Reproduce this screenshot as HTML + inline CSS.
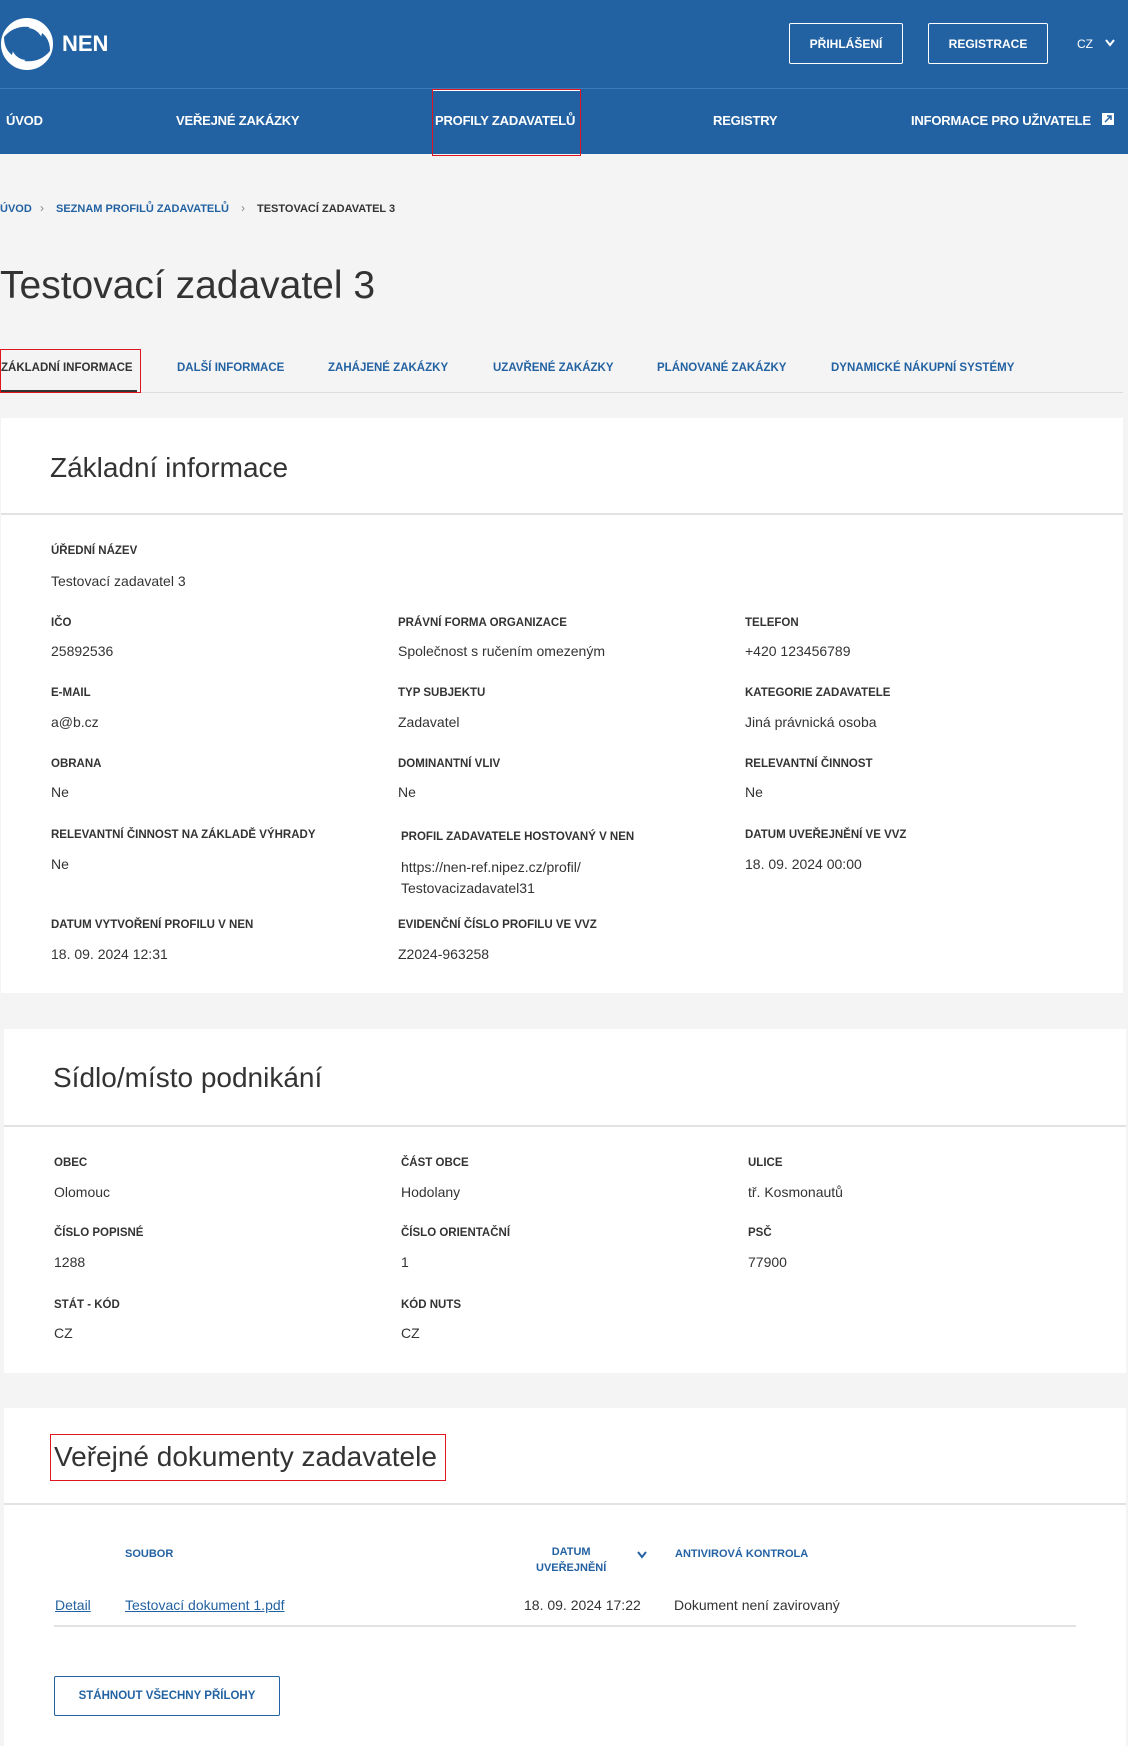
<!DOCTYPE html>
<html><head><meta charset="utf-8"><style>
*{margin:0;padding:0;box-sizing:border-box}
body{width:1128px;height:1746px;background:#f4f4f4;font-family:"Liberation Sans",sans-serif;color:#333;position:relative;overflow:hidden}
.a{position:absolute;white-space:nowrap}
.hdr{position:absolute;left:0;top:0;width:1128px;height:154px;background:#2362a2}
.navl{position:absolute;left:0;top:88px;width:1128px;height:1px;background:#3d7ab8}
.w{color:#fff;font-weight:bold;font-size:13px;letter-spacing:-0.2px}
.btn{position:absolute;border:1px solid #fff;border-radius:2px;color:#fff;font-weight:bold;font-size:12px;display:flex;align-items:center;justify-content:center}
.bc{font-size:11px;font-weight:bold;color:#2362a2}
.tab{font-size:11.5px;font-weight:bold;color:#2362a2;top:362px}
.card{position:absolute;background:#fff}
.h2{font-size:28px;color:#333}
.div{position:absolute;left:0;right:0;height:2px;background:#e2e2e2}
.lb{font-size:11.5px;font-weight:bold;color:#333}
.v{font-size:14px;color:#333}
.th{font-size:11px;font-weight:bold;color:#2362a2}
</style></head><body>
<div class="hdr"></div>
<div class="navl"></div>
<svg class="a" style="left:0;top:17px" width="54" height="54" viewBox="0 0 54 54">
<circle cx="27" cy="27" r="21" fill="none" stroke="#fff" stroke-width="10"/>
<path d="M4 20 Q14 8 30 10 Q16 18 12 38 Q4 32 4 20Z" fill="#2362a2"/>
<path d="M50 34 Q40 46 24 44 Q38 36 42 16 Q50 22 50 34Z" fill="#2362a2"/>
</svg>
<div class="a" style="left:62px;top:31px;color:#fff;font-weight:bold;font-size:22px">NEN</div>
<div class="btn" style="left:789px;top:23px;width:114px;height:41px">PŘIHLÁŠENÍ</div>
<div class="btn" style="left:928px;top:23px;width:120px;height:41px">REGISTRACE</div>
<div class="a" style="left:1077px;top:37px;color:#fff;font-size:12px">CZ</div>
<svg class="a" style="left:1104px;top:38px" width="12" height="10"><path d="M2 2 L6 7 L10 2" stroke="#fff" stroke-width="2" fill="none"/></svg>
<div class="a w" style="left:6px;top:113px">ÚVOD</div>
<div class="a w" style="left:176px;top:113px">VEŘEJNÉ ZAKÁZKY</div>
<div class="a" style="left:433px;top:89px;width:148px;height:2px;background:#fff"></div>
<div class="a" style="left:432px;top:89px;width:149px;height:67px;border:1px solid #e0141e"></div>
<div class="a w" style="left:435px;top:113px">PROFILY ZADAVATELŮ</div>
<div class="a w" style="left:713px;top:113px">REGISTRY</div>
<div class="a w" style="left:911px;top:113px">INFORMACE PRO UŽIVATELE</div>
<svg class="a" style="left:1102px;top:113px" width="12" height="12"><rect width="12" height="12" fill="#fff"/><path d="M3 9 L9 3 M5 3 H9 V7" stroke="#2362a2" stroke-width="1.5" fill="none"/></svg>

<div class="a bc" style="left:0;top:203px">ÚVOD</div>
<div class="a" style="left:40px;top:201px;color:#888;font-size:12px">›</div>
<div class="a bc" style="left:56px;top:203px">SEZNAM PROFILŮ ZADAVATELŮ</div>
<div class="a" style="left:241px;top:201px;color:#888;font-size:12px">›</div>
<div class="a bc" style="left:257px;top:203px;color:#333">TESTOVACÍ ZADAVATEL 3</div>

<div class="a" style="left:0;top:264px;font-size:39px;color:#333">Testovací zadavatel 3</div>

<div class="a" style="left:0;top:392px;width:1123px;height:1px;background:#ddd"></div>
<div class="a" style="left:0;top:390px;width:137px;height:3px;background:#333"></div>
<div class="a" style="left:0;top:349px;width:141px;height:44px;border:1px solid #e0141e"></div>
<div class="a tab" style="left:1px;color:#333">ZÁKLADNÍ INFORMACE</div>
<div class="a tab" style="left:177px">DALŠÍ INFORMACE</div>
<div class="a tab" style="left:328px">ZAHÁJENÉ ZAKÁZKY</div>
<div class="a tab" style="left:493px">UZAVŘENÉ ZAKÁZKY</div>
<div class="a tab" style="left:657px">PLÁNOVANÉ ZAKÁZKY</div>
<div class="a tab" style="left:831px">DYNAMICKÉ NÁKUPNÍ SYSTÉMY</div>

<div class="card" style="left:1px;top:418px;width:1122px;height:575px">
<div class="a h2" style="left:49px;top:34px">Základní informace</div>
<div class="div" style="top:95px"></div>
<div class="a lb" style="left:50px;top:127px">ÚŘEDNÍ NÁZEV</div>
<div class="a v" style="left:50px;top:155px">Testovací zadavatel 3</div>
<div class="a lb" style="left:50px;top:199px">IČO</div><div class="a v" style="left:50px;top:225px">25892536</div>
<div class="a lb" style="left:397px;top:199px">PRÁVNÍ FORMA ORGANIZACE</div><div class="a v" style="left:397px;top:225px">Společnost s ručením omezeným</div>
<div class="a lb" style="left:744px;top:199px">TELEFON</div><div class="a v" style="left:744px;top:225px">+420 123456789</div>
<div class="a lb" style="left:50px;top:269px">E-MAIL</div><div class="a v" style="left:50px;top:296px">a@b.cz</div>
<div class="a lb" style="left:397px;top:269px">TYP SUBJEKTU</div><div class="a v" style="left:397px;top:296px">Zadavatel</div>
<div class="a lb" style="left:744px;top:269px">KATEGORIE ZADAVATELE</div><div class="a v" style="left:744px;top:296px">Jiná právnická osoba</div>
<div class="a lb" style="left:50px;top:340px">OBRANA</div><div class="a v" style="left:50px;top:366px">Ne</div>
<div class="a lb" style="left:397px;top:340px">DOMINANTNÍ VLIV</div><div class="a v" style="left:397px;top:366px">Ne</div>
<div class="a lb" style="left:744px;top:340px">RELEVANTNÍ ČINNOST</div><div class="a v" style="left:744px;top:366px">Ne</div>
<div class="a lb" style="left:50px;top:411px">RELEVANTNÍ ČINNOST NA ZÁKLADĚ VÝHRADY</div><div class="a v" style="left:50px;top:438px">Ne</div>
<div class="a lb" style="left:400px;top:413px">PROFIL ZADAVATELE HOSTOVANÝ V NEN</div><div class="a v" style="left:400px;top:439px;line-height:21px">https://nen-ref.nipez.cz/profil/<br>Testovacizadavatel31</div>
<div class="a lb" style="left:744px;top:411px">DATUM UVEŘEJNĚNÍ VE VVZ</div><div class="a v" style="left:744px;top:438px">18. 09. 2024 00:00</div>
<div class="a lb" style="left:50px;top:501px">DATUM VYTVOŘENÍ PROFILU V NEN</div><div class="a v" style="left:50px;top:528px">18. 09. 2024 12:31</div>
<div class="a lb" style="left:397px;top:501px">EVIDENČNÍ ČÍSLO PROFILU VE VVZ</div><div class="a v" style="left:397px;top:528px">Z2024-963258</div>
</div>

<div class="card" style="left:4px;top:1029px;width:1122px;height:344px">
<div class="a h2" style="left:49px;top:33px">Sídlo/místo podnikání</div>
<div class="div" style="top:96px"></div>
<div class="a lb" style="left:50px;top:128px">OBEC</div><div class="a v" style="left:50px;top:155px">Olomouc</div>
<div class="a lb" style="left:397px;top:128px">ČÁST OBCE</div><div class="a v" style="left:397px;top:155px">Hodolany</div>
<div class="a lb" style="left:744px;top:128px">ULICE</div><div class="a v" style="left:744px;top:155px">tř. Kosmonautů</div>
<div class="a lb" style="left:50px;top:198px">ČÍSLO POPISNÉ</div><div class="a v" style="left:50px;top:225px">1288</div>
<div class="a lb" style="left:397px;top:198px">ČÍSLO ORIENTAČNÍ</div><div class="a v" style="left:397px;top:225px">1</div>
<div class="a lb" style="left:744px;top:198px">PSČ</div><div class="a v" style="left:744px;top:225px">77900</div>
<div class="a lb" style="left:50px;top:270px">STÁT - KÓD</div><div class="a v" style="left:50px;top:296px">CZ</div>
<div class="a lb" style="left:397px;top:270px">KÓD NUTS</div><div class="a v" style="left:397px;top:296px">CZ</div>
</div>

<div class="card" style="left:4px;top:1408px;width:1122px;height:338px">
<div class="a" style="left:46px;top:26px;width:396px;height:47px;border:1px solid #e0141e"></div>
<div class="a h2" style="left:50px;top:33px">Veřejné dokumenty zadavatele</div>
<div class="div" style="top:95px"></div>
<div class="a th" style="left:121px;top:140px">SOUBOR</div>
<div class="a th" style="left:532px;top:136px;text-align:center;line-height:16px">DATUM<br>UVEŘEJNĚNÍ</div>
<svg class="a" style="left:632px;top:142px" width="12" height="10"><path d="M2 2 L6 7 L10 2" stroke="#2362a2" stroke-width="2" fill="none"/></svg>
<div class="a th" style="left:671px;top:140px">ANTIVIROVÁ KONTROLA</div>
<div class="a v" style="left:51px;top:189px;color:#2362a2;text-decoration:underline">Detail</div>
<div class="a v" style="left:121px;top:189px;color:#2362a2;text-decoration:underline">Testovací dokument 1.pdf</div>
<div class="a v" style="left:520px;top:189px">18. 09. 2024 17:22</div>
<div class="a v" style="left:670px;top:189px">Dokument není zavirovaný</div>
<div class="a" style="left:50px;top:217px;width:1022px;height:2px;background:#e2e2e2"></div>
<div class="a" style="left:50px;top:268px;width:226px;height:40px;border:1.5px solid #2362a2;border-radius:2px;color:#2362a2;font-weight:bold;font-size:11.5px;display:flex;align-items:center;justify-content:center">STÁHNOUT VŠECHNY PŘÍLOHY</div>
</div>
</body></html>
